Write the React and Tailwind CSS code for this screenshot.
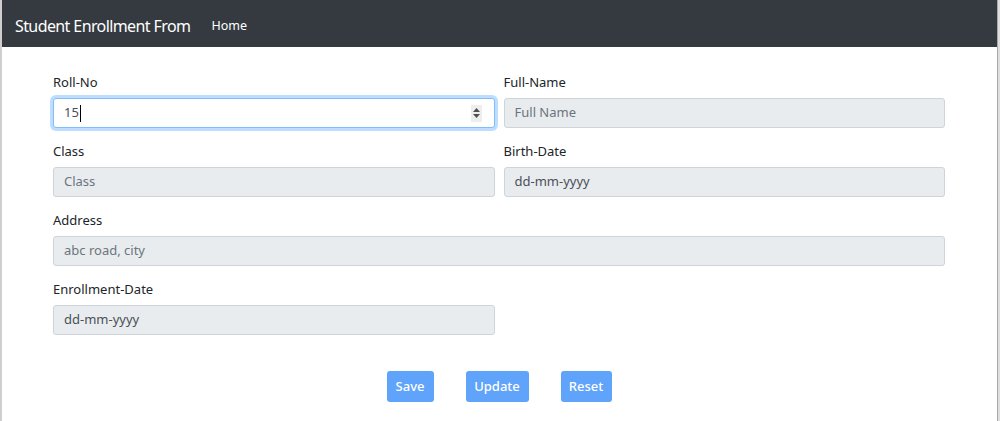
import React from 'react';

const Field = ({ label, children, className = '' }) => (
  <div className={`flex flex-col ${className}`}>
    <label className="text-[13px] leading-[21px] text-[#212529] mb-[5px]">{label}</label>
    {children}
  </div>
);

const ReadOnly = ({ text, muted = true }) => (
  <div
    className={`h-[30px] rounded-[3px] border border-[#ced4da] bg-[#e9ecef] px-[10px] flex items-center text-[13px] ${
      muted ? 'text-[#6c757d]' : 'text-[#495057]'
    }`}
  >
    {text}
  </div>
);

export default function App() {
  return (
    <div className="flex w-[1000px] h-[421px] bg-white font-['Noto_Sans',sans-serif] overflow-hidden">
      <div className="w-[2px] bg-[#cfcfcf] shrink-0" />
      <div className="flex-1 flex flex-col">
        <nav className="h-[47px] bg-[#343a40] flex items-center pl-[13px] pt-[4px]">
          <span className="text-white text-[16px] tracking-[-0.6px]">Student Enrollment From</span>
          <span className="text-white text-[12.5px] ml-[21px] mt-[2px]">Home</span>
        </nav>
        <div className="flex-1 px-[51px] pt-[25px]">
          <div className="grid grid-cols-2 gap-x-[9px] gap-y-[13px] w-[892px]">
            <Field label="Roll-No">
              <div className="h-[30px] rounded-[3px] border border-[#80bdff] bg-white shadow-[0_0_0_3px_rgba(0,123,255,0.25)] pl-[10px] pr-[12px] flex items-center justify-between text-[13px] text-[#495057]">
                <span className="flex items-center">
                  15<span className="inline-block w-px h-[17px] bg-black ml-px" />
                </span>
                <span className="flex flex-col items-center justify-center w-[11px] h-[17px] bg-[#eeeeee] gap-[2px]">
                  <svg width="7" height="4" viewBox="0 0 7 4"><path d="M0 4 L3.5 0 L7 4Z" fill="#505050" /></svg>
                  <svg width="7" height="4" viewBox="0 0 7 4"><path d="M0 0 L3.5 4 L7 0Z" fill="#505050" /></svg>
                </span>
              </div>
            </Field>
            <Field label="Full-Name">
              <ReadOnly text="Full Name" />
            </Field>
            <Field label="Class">
              <ReadOnly text="Class" />
            </Field>
            <Field label="Birth-Date">
              <ReadOnly text="dd-mm-yyyy" muted={false} />
            </Field>
            <Field label="Address" className="col-span-2">
              <ReadOnly text="abc road, city" />
            </Field>
            <Field label="Enrollment-Date">
              <ReadOnly text="dd-mm-yyyy" muted={false} />
            </Field>
          </div>
          <div className="flex justify-center gap-[32px] mt-[36px] w-[892px]">
            <button className="h-[31px] w-[47px] rounded-[3px] bg-[#60a3fb] text-white text-[13px] font-medium">Save</button>
            <button className="h-[31px] w-[63px] rounded-[3px] bg-[#60a3fb] text-white text-[13px] font-medium">Update</button>
            <button className="h-[31px] w-[51px] rounded-[3px] bg-[#60a3fb] text-white text-[13px] font-medium">Reset</button>
          </div>
        </div>
      </div>
      <div className="w-px bg-[#a8a8a8] shrink-0" />
      <div className="w-[2px] bg-[#dedede] shrink-0" />
    </div>
  );
}
